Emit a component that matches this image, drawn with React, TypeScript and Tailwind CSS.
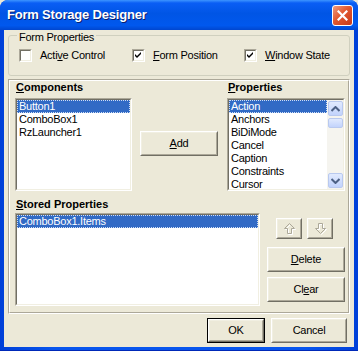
import React from "react";

const FONT = "font-['Liberation_Sans',Arial,sans-serif]";

function Sunken({ className, children }: { className: string; children?: React.ReactNode }) {
  return (
    <div className={`border border-t-[#ACA899] border-l-[#ACA899] border-b-white border-r-white ${className}`}>
      <div className="h-full w-full border border-t-[#716F64] border-l-[#716F64] border-b-[#F1EFE2] border-r-[#F1EFE2] bg-white overflow-hidden">
        {children}
      </div>
    </div>
  );
}

function Button({ className, children }: { className: string; children?: React.ReactNode }) {
  return (
    <div className={`border border-t-white border-l-white border-b-[#716F64] border-r-[#716F64] ${className}`}>
      <div className="flex h-full w-full items-center justify-center border border-t-[#F1EFE2] border-l-[#F1EFE2] border-b-[#ACA899] border-r-[#ACA899] bg-[#ECE9D8] text-[11px] leading-[13px] text-black">
        {children}
      </div>
    </div>
  );
}

function Check({ checked }: { checked: boolean }) {
  return (
    <div className="h-[13px] w-[13px] shrink-0 border border-t-[#ACA899] border-l-[#ACA899] border-b-white border-r-white">
      <div className="h-full w-full border border-t-[#716F64] border-l-[#716F64] border-b-[#F1EFE2] border-r-[#F1EFE2] bg-white">
        {checked && (
          <svg width="9" height="9" viewBox="0 0 9 9" className="block">
            <path d="M1 3 L3 5 L7 1 L7 3 L3 7 L1 5 Z" fill="#000" />
          </svg>
        )}
      </div>
    </div>
  );
}

function Item({ text, selected }: { text: string; selected?: boolean }) {
  return (
    <div
      className={
        selected
          ? "h-[13px] bg-[#316AC5] pl-[2px] text-[11px] leading-[13px] tracking-[-0.25px] text-white outline-1 outline-dotted outline-offset-[-1px] outline-[#CEDDF5]"
          : "h-[13px] pl-[2px] text-[11px] leading-[13px] tracking-[-0.25px] text-black"
      }
    >
      {text}
    </div>
  );
}

function Chevron({ up }: { up: boolean }) {
  return (
    <svg width="9" height="6" viewBox="0 0 9 6" className="block">
      <path
        d={up ? "M0.5 5 L4.5 1 L8.5 5" : "M0.5 1 L4.5 5 L8.5 1"}
        fill="none"
        stroke="#4D6185"
        strokeWidth="2"
      />
    </svg>
  );
}

function SbBtn({ up }: { up: boolean }) {
  return (
    <div className="flex h-[15px] w-[15px] items-center justify-center rounded-[2px] border border-[#B9C9EF] bg-[linear-gradient(to_bottom,#E1EAFE,#C2D3FC)]">
      <Chevron up={up} />
    </div>
  );
}

function Arrow({ up }: { up: boolean }) {
  const d = up
    ? "M6.5 1.5 L11.5 6.5 L8.5 6.5 L8.5 11.5 L4.5 11.5 L4.5 6.5 L1.5 6.5 Z"
    : "M6.5 11.5 L11.5 6.5 L8.5 6.5 L8.5 1.5 L4.5 1.5 L4.5 6.5 L1.5 6.5 Z";
  return (
    <svg width="13" height="13" viewBox="0 0 13 13" className="block">
      <path d={d} fill="none" stroke="#FFFFFF" strokeWidth="1" transform="translate(1,1)" />
      <path d={d} fill="none" stroke="#ACA899" strokeWidth="1" />
    </svg>
  );
}

export default function App() {
  return (
    <div className={`${FONT} h-[351px] w-[358px] overflow-hidden bg-[#ECE9D8]`}>
      <div className="flex h-full w-full flex-col rounded-t-[8px] border-b border-b-[#0029B8] bg-[linear-gradient(to_right,#0040D8,#0856EE_15%,#0856EE_85%,#0040D8)]">
        {/* title bar */}
        <div className="flex h-[30px] items-center justify-between rounded-t-[8px] bg-[linear-gradient(to_bottom,#3D95FF_0%,#0A5EF5_10%,#0055E5_45%,#0058EE_85%,#0046CF_100%)] pl-[7px] pr-[5px]">
          <span className="text-[13px] font-bold leading-[16px] tracking-[-0.2px] text-white [text-shadow:1px_1px_0_#0A1E6E]">
            Form Storage Designer
          </span>
          <div className="flex h-[21px] w-[21px] items-center justify-center rounded-[3px] border border-white bg-[linear-gradient(135deg,#EE9C80_0%,#E2582F_45%,#C7391A_100%)]">
            <svg width="11" height="11" viewBox="0 0 11 11" className="block">
              <path d="M1.5 1.5 L9.5 9.5 M9.5 1.5 L1.5 9.5" stroke="#fff" strokeWidth="2.2" strokeLinecap="square" />
            </svg>
          </div>
        </div>
        {/* client */}
        <div className="mx-[4px] mb-[3px] flex flex-1 flex-col bg-[#ECE9D8] px-[4px] text-[11px] leading-[13px] tracking-[-0.25px] text-black">
          {/* group box */}
          <div className="relative mt-[5px] h-[41px] rounded-[3px] border border-[#D0D0BF] pl-[10px] pt-[13px]">
            <span className="absolute left-[8px] top-[-5px] bg-[#ECE9D8] px-[2px] leading-[13px]">
              Form Properties
            </span>
            <div className="flex items-center">
              <Check checked={false} />
              <span className="ml-[8px] w-[92px]">
                Acti<span className="underline">v</span>e Control
              </span>
              <Check checked={true} />
              <span className="ml-[8px] w-[91px]">
                <span className="underline">F</span>orm Position
              </span>
              <Check checked={true} />
              <span className="ml-[8px]">
                <span className="underline">W</span>indow State
              </span>
            </div>
          </div>
          {/* main panel (etched) */}
          <div className="mt-[3px] h-[235px] border border-t-[#ACA899] border-l-[#ACA899] border-b-white border-r-white">
            <div className="flex h-full w-full flex-col border border-t-white border-l-white border-b-[#ACA899] border-r-[#ACA899] pl-[5px]">
              <div className="flex">
                <div className="flex flex-col">
                  <div className="pl-[1px] font-bold tracking-normal">
                    <span className="underline">C</span>omponents
                  </div>
                  <Sunken className="mt-[4px] h-[93px] w-[117px]">
                    <Item text="Button1" selected />
                    <Item text="ComboBox1" />
                    <Item text="RzLauncher1" />
                  </Sunken>
                </div>
                <Button className="ml-[8px] mt-[50px] h-[25px] w-[78px]">
                  <span className="underline">A</span>dd
                </Button>
                <div className="ml-[9px] flex flex-col">
                  <div className="pl-[1px] font-bold tracking-normal">
                    <span className="underline">P</span>roperties
                  </div>
                  <Sunken className="mt-[4px] h-[93px] w-[118px]">
                    <div className="flex h-full">
                      <div className="flex-1">
                        <Item text="Action" selected />
                        <Item text="Anchors" />
                        <Item text="BiDiMode" />
                        <Item text="Cancel" />
                        <Item text="Caption" />
                        <Item text="Constraints" />
                        <Item text="Cursor" />
                      </div>
                      <div className="flex w-[16px] flex-col items-center justify-between bg-[#F5F4EF] py-[1px]">
                        <div className="flex flex-col items-center gap-[2px]">
                          <SbBtn up />
                          <div className="h-[10px] w-[15px] rounded-[2px] border border-[#B9C9EF] bg-[linear-gradient(to_bottom,#E1EAFE,#C2D3FC)]" />
                        </div>
                        <SbBtn up={false} />
                      </div>
                    </div>
                  </Sunken>
                </div>
              </div>
              <div className="mt-[7px] flex">
                <div className="flex flex-col">
                  <div className="pl-[1px] font-bold tracking-normal">
                    <span className="underline">S</span>tored Properties
                  </div>
                  <Sunken className="mt-[2px] h-[93px] w-[245px]">
                    <Item text="ComboBox1.Items" selected />
                  </Sunken>
                </div>
                <div className="ml-[7px] mt-[20px] flex flex-col">
                  <div className="flex gap-[5px] pl-[9px]">
                    <Button className="h-[21px] w-[26px]">
                      <Arrow up />
                    </Button>
                    <Button className="h-[21px] w-[26px]">
                      <Arrow up={false} />
                    </Button>
                  </div>
                  <Button className="mt-[8px] h-[25px] w-[78px]">
                    <span className="underline">D</span>elete
                  </Button>
                  <Button className="mt-[5px] h-[25px] w-[78px]">
                    Cl<span className="underline">e</span>ar
                  </Button>
                </div>
              </div>
            </div>
          </div>
          <div className="mt-[4px] flex justify-end gap-[6px] pr-[3px]">
            <div className="h-[25px] w-[58px] border border-black">
              <Button className="h-full w-full">OK</Button>
            </div>
            <Button className="h-[25px] w-[76px]">Cancel</Button>
          </div>
        </div>
      </div>
    </div>
  );
}
